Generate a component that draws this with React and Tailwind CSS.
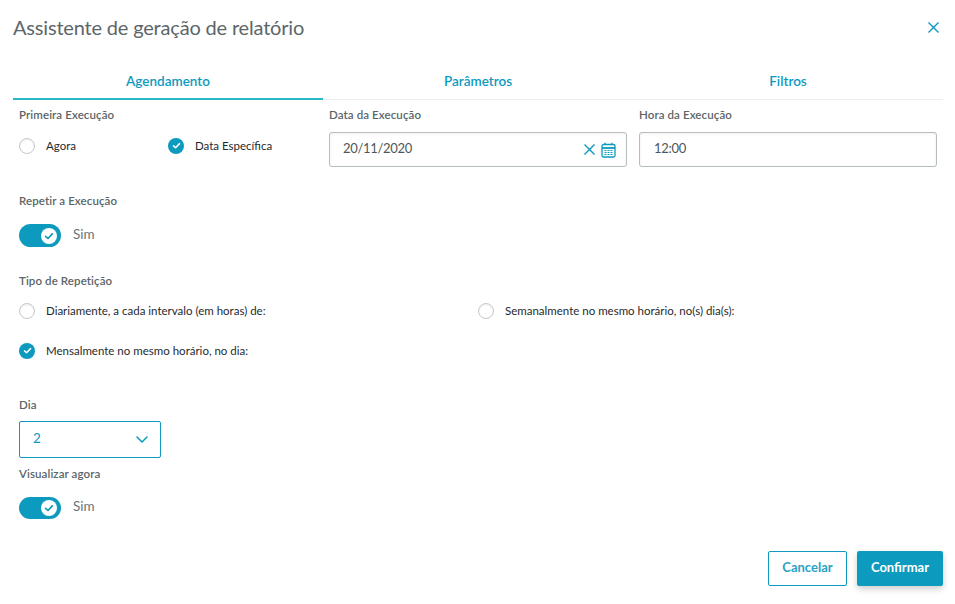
import React from "react";

function Check({ size = 10 }) {
  return (
    <svg width={size} height={size} viewBox="0 0 12 12" fill="none" stroke="currentColor" strokeWidth="2" strokeLinecap="round" strokeLinejoin="round">
      <path d="M2 6.5 L4.8 9 L10 3.5" />
    </svg>
  );
}

function Radio({ checked, label }) {
  return (
    <div className="flex items-center">
      {checked ? (
        <span className="w-4 h-4 rounded-full bg-[#0c9abe] text-white flex items-center justify-center shrink-0">
          <Check size={9} />
        </span>
      ) : (
        <span className="w-4 h-4 rounded-full border border-[#c4c9ca] bg-white shadow-[inset_0_1px_2px_rgba(0,0,0,0.08)] shrink-0" />
      )}
      <span className="ml-[11px] mt-[1px] text-[11.5px] leading-4 text-[#1f2a2e]">{label}</span>
    </div>
  );
}

function Toggle({ h = "h-[23px]" }) {
  return (
    <div className="flex items-center">
      <span className={`w-[42px] ${h} rounded-full bg-[#0c9abe] flex items-center justify-end pr-[4px]`}>
        <span className="w-4 h-4 rounded-full bg-white text-[#0c9abe] flex items-center justify-center">
          <Check size={10} />
        </span>
      </span>
      <span className="ml-3 mb-[4px] text-[13.5px] leading-4 text-[#6b7679]">Sim</span>
    </div>
  );
}

function Label({ children }) {
  return <div className="text-[11.5px] leading-4 font-semibold text-[#5a6568] tracking-[0.1px]">{children}</div>;
}

function Calendar() {
  return (
    <svg width="15" height="16" viewBox="0 0 15 16" fill="none" stroke="#0c9abe">
      <rect x="1" y="2.5" width="13" height="12.5" rx="1.5" strokeWidth="1.3" />
      <path d="M1 6 H14" strokeWidth="1.8" />
      <path d="M4 0.8 V3 M11 0.8 V3" strokeWidth="1.3" />
      <path d="M3.5 8.5 H11.5 M3.5 10.5 H11.5 M3.5 12.5 H11.5" strokeWidth="1.1" strokeDasharray="2 1" />
    </svg>
  );
}

function Cross({ size = 11 }) {
  return (
    <svg width={size} height={size} viewBox="0 0 11 11" fill="none" stroke="#0c9abe" strokeWidth="1.4" strokeLinecap="square">
      <path d="M1 1 L10 10 M10 1 L1 10" />
    </svg>
  );
}

export default function App() {
  return (
    <div className="w-[955px] h-[604px] bg-white overflow-hidden flex flex-col font-['Lato','Noto_Sans',sans-serif]">
      <header className="h-[65px] shrink-0 pl-[13px] pr-[16px] pt-[15px] flex justify-between items-start">
        <h1 className="text-[20px] leading-6 font-normal text-[#5b6669] tracking-[-0.18px]">Assistente de geração de relatório</h1>
        <span className="mt-[7px]"><Cross /></span>
      </header>

      <nav className="mx-[13px] w-[930px] h-[35px] shrink-0 grid grid-cols-3 border-b border-[#eceeef]">
        <div className="h-[35px] border-b-2 border-[#29b6c5] text-center text-[13.5px] leading-[32px] font-semibold text-[#0c9abe]">Agendamento</div>
        <div className="text-center text-[13.5px] leading-[32px] font-semibold text-[#0c9abe]">Parâmetros</div>
        <div className="text-center text-[13.5px] leading-[32px] font-semibold text-[#0c9abe]">Filtros</div>
      </nav>

      <main className="pl-[19px] flex-1 flex flex-col">
        <section className="flex pt-[7px]">
          <div className="w-[310px] shrink-0">
            <Label>Primeira Execução</Label>
            <div className="flex mt-[14px]">
              <div className="w-[149px]"><Radio label="Agora" /></div>
              <Radio checked label="Data Específica" />
            </div>
          </div>
          <div className="w-[298px] shrink-0">
            <Label>Data da Execução</Label>
            <div className="mt-[9px] h-[35px] border border-[#b6bec0] rounded-[3px] pl-[13px] pr-[10px] flex items-center justify-between text-[13px] text-[#4d575a] tracking-[-0.3px] shadow-[inset_0_1px_3px_rgba(0,0,0,0.06)]">
              <span className="mb-[2px]">20/11/2020</span>
              <span className="flex items-center gap-[6px]"><Cross size={11} /><Calendar /></span>
            </div>
          </div>
          <div className="w-[298px] ml-[12px] shrink-0">
            <Label>Hora da Execução</Label>
            <div className="mt-[9px] h-[35px] border border-[#b6bec0] rounded-[3px] pl-[14px] flex items-center text-[13px] text-[#4d575a] tracking-[-0.3px] shadow-[inset_0_1px_3px_rgba(0,0,0,0.06)]">
              <span className="mb-[2px]">12:00</span>
            </div>
          </div>
        </section>

        <section className="mt-[26px]">
          <Label>Repetir a Execução</Label>
          <div className="mt-[15px]"><Toggle /></div>
        </section>

        <section className="mt-[26px]">
          <Label>Tipo de Repetição</Label>
          <div className="flex mt-[13px]">
            <div className="w-[459px]"><Radio label="Diariamente, a cada intervalo (em horas) de:" /></div>
            <Radio label="Semanalmente no mesmo horário, no(s) dia(s):" />
          </div>
          <div className="mt-[23px]"><Radio checked label="Mensalmente no mesmo horário, no dia:" /></div>
        </section>

        <section className="mt-[38px]">
          <Label>Dia</Label>
          <div className="mt-[8px] w-[142px] h-[37px] border border-[#0c9abe] rounded-[2px] pl-[13px] pr-[12px] flex items-center justify-between text-[13.5px] text-[#0c9abe]">
            <span className="mb-[2px]">2</span>
            <svg width="12" height="7" viewBox="0 0 12 7" fill="none" stroke="#0c9abe" strokeWidth="1.5" strokeLinecap="round" strokeLinejoin="round"><path d="M1 1 L6 6 L11 1" /></svg>
          </div>
        </section>

        <section className="mt-[8px]">
          <Label>Visualizar agora</Label>
          <div className="mt-[15px]"><Toggle h="h-[22px]" /></div>
        </section>
      </main>

      <footer className="shrink-0 pr-[12px] pb-[18px] flex justify-end gap-[10px]">
        <button className="w-[79px] h-[35px] bg-white border border-[#0c9abe] rounded-[2px] text-[13px] font-bold text-[#2aa3c4]"><span className="block -mt-[1px]">Cancelar</span></button>
        <button className="w-[86px] h-[35px] bg-[#0c9abe] rounded-[2px] text-[13px] font-bold text-white shadow-[0_3px_6px_rgba(0,0,0,0.2)]"><span className="block -mt-[1px]">Confirmar</span></button>
      </footer>
    </div>
  );
}
